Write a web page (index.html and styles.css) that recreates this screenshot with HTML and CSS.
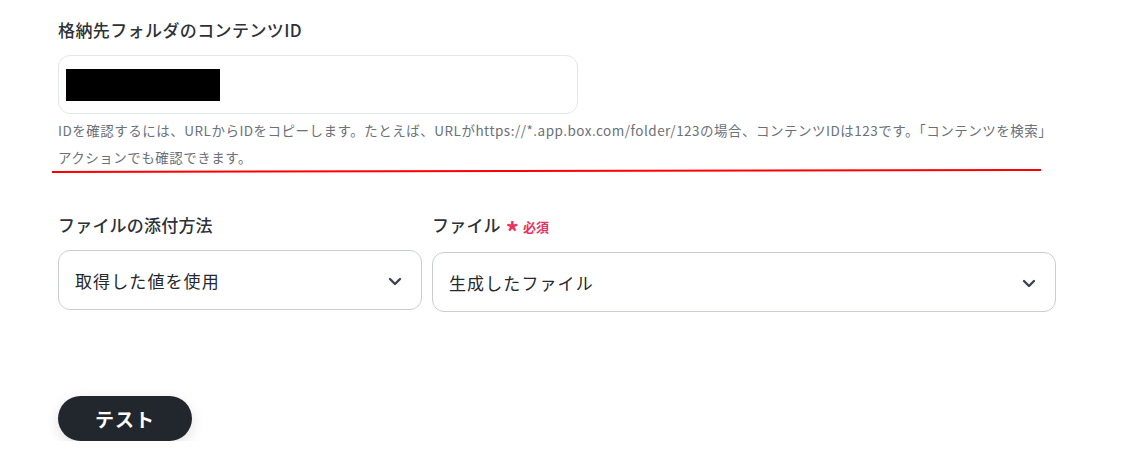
FILE: index.html
```html
<!DOCTYPE html>
<html lang="ja">
<head>
<meta charset="utf-8">
<link rel="stylesheet" href="styles.css">
</head>
<body>
<main class="form">
  <section class="field field-id">
    <div class="label label-id">格納先フォルダのコンテンツID</div>
    <div class="input"><span class="redact"></span></div>
    <div class="help-wrap">
      <p class="help"><span class="line">IDを確認するには、URLからIDをコピーします。たとえば、URLがhttps://*.app.box.com/folder/123の場合、コンテンツIDは123です。「コンテンツを検索」</span><span class="line">アクションでも確認できます。</span></p>
      <svg class="redline" width="1000" height="8" viewBox="0 0 1000 8"><line x1="0" y1="5" x2="989" y2="3" stroke="#ff0000" stroke-width="2"/></svg>
    </div>
  </section>

  <section class="row">
    <div class="field col-a">
      <div class="label">ファイルの添付方法</div>
      <div class="select">
        <span>取得した値を使用</span>
        <svg class="chev" width="14" height="9" viewBox="0 0 14 9"><path d="M2 2l5 5 5-5" fill="none" stroke="#3d4450" stroke-width="2.4" stroke-linecap="round" stroke-linejoin="round"/></svg>
      </div>
    </div>
    <div class="field col-b">
      <div class="label">ファイル <span class="req"><span class="ast">*</span>必須</span></div>
      <div class="select">
        <span>生成したファイル</span>
        <svg class="chev" width="14" height="9" viewBox="0 0 14 9"><path d="M2 2l5 5 5-5" fill="none" stroke="#3d4450" stroke-width="2.4" stroke-linecap="round" stroke-linejoin="round"/></svg>
      </div>
    </div>
  </section>

  <div class="actions">
    <button class="btn">テスト</button>
  </div>
</main>
</body>
</html>
```

FILE: styles.css
```css
html, body {
  margin: 0;
  padding: 0;
  background: #ffffff;
}
body {
  font-family: "Noto Sans CJK JP", "Noto Sans", sans-serif;
  color: #2b2f36;
}
.form {
  padding: 18px 0 0 58px;
  width: 1000px;
}
.label {
  font-size: 17px;
  line-height: 24px;
  font-weight: 500;
  color: #2e3238;
  letter-spacing: 0.2px;
}
.label-id {
  letter-spacing: 0.4px;
}
.field-id .input {
  margin-top: 13px;
  width: 511px;
  height: 57px;
  border: 1px solid #e3e6ea;
  border-radius: 12px;
  display: flex;
  align-items: center;
  padding-left: 7px;
  box-sizing: content-box;
}
.redact {
  display: block;
  width: 154px;
  height: 32px;
  background: #000;
}
.help-wrap {
  position: relative;
  margin-top: 3px;
}
.help {
  margin: 0;
  width: 1040px;
  font-size: 13.5px;
  line-height: 27px;
  color: #6b7079;
  letter-spacing: 0.5px;
}
.help .line {
  display: block;
  white-space: nowrap;
}
.redline {
  position: absolute;
  left: -6px;
  top: 50px;
}
.row {
  display: flex;
  gap: 10px;
  margin-top: 42px;
}
.col-a { width: 364px; }
.col-b { width: 624px; }
.req {
  color: #e8335e;
  font-size: 13px;
  font-weight: 700;
  margin-left: 1px;
  letter-spacing: 0;
}
.ast {
  display: inline-block;
  font-size: 26px;
  line-height: 0;
  vertical-align: -10px;
  margin-right: 4px;
}
.select {
  margin-top: 13px;
  height: 58px;
  border: 1px solid #c9cdd3;
  border-radius: 12px;
  display: flex;
  align-items: center;
  justify-content: space-between;
  padding: 0 19px 0 16px;
  font-size: 17px;
  letter-spacing: 1.1px;
  color: #25282d;
}
.col-b .select {
  margin-top: 13px;
}
.chev {
  display: block;
  margin-top: 2px;
}
.actions {
  margin-top: 84px;
}
.btn {
  width: 134px;
  height: 45px;
  border: none;
  border-radius: 23px;
  background: #22262d;
  color: #ffffff;
  font-family: "Noto Sans CJK JP", sans-serif;
  font-size: 19px;
  font-weight: 700;
  letter-spacing: 1px;
  box-shadow: 0 4px 14px rgba(0, 0, 0, 0.12);
  cursor: pointer;
}
```
